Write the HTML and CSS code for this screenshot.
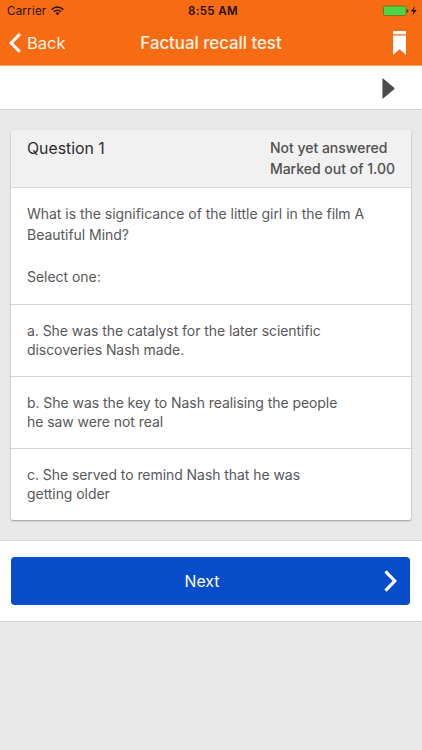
FILE: index.html
```html
<!DOCTYPE html>
<html lang="en">
<head>
    <meta charset="UTF-8">
    <meta name="viewport" content="width=device-width, initial-scale=1.0">
    <title>Factual recall test</title>
    <link rel="stylesheet" href="styles.css">
</head>
<body>

    <!-- Header -->
    <header class="header">
        <div class="status">
            <div class="carrier">
                <span>Carrier</span>
                <svg width="13" height="10" viewBox="0 0 13 10" fill="none" stroke="#251003" stroke-width="1.5">
                    <path d="M0.7 3.6Q6.5 -1.6 12.3 3.6M2.8 5.8Q6.5 2.6 10.2 5.8"/>
                    <path d="M4.4 7.2Q6.5 5.4 8.6 7.2L6.5 9.3Z" fill="#251003" stroke="none"/>
                </svg>
            </div>
            <span class="time">8:55 AM</span>
            <div class="battery">
                <svg width="34" height="12" viewBox="0 0 34 12">
                    <rect x="0.5" y="1" width="22.5" height="9.6" rx="1.5" fill="#4cd549" stroke="#6f7a18"/>
                    <path d="M23.8 4.3Q25.5 4.6 25.5 6T23.8 7.7Z" fill="#5a3008"/>
                    <path d="M32 1L27.8 6.4H30.4L29.4 10.6L33.7 5H31Z" fill="#251003"/>
                </svg>
            </div>
        </div>
        <div class="navbar">
            <a class="back" href="#">
                <svg width="12" height="20" viewBox="0 0 12 20" fill="none" stroke="#fff" stroke-width="3">
                    <path d="M10.9 1.1L2.1 10L10.9 18.9"/>
                </svg>
                <span>Back</span>
            </a>
            <h1 class="title">Factual recall test</h1>
            <svg class="bookmark" width="13" height="24" viewBox="0 0 13 24" fill="#fff">
                <path d="M0 0H13V3.3H0ZM0 4.6H13V24L6.5 18.3L0 24Z"/>
            </svg>
        </div>
    </header>

    <!-- Page navigation -->
    <div class="toolbar">
        <svg width="13" height="21" viewBox="0 0 13 21" fill="#4c4c4c">
            <path d="M0.4 0.8Q0.4 0 1.1 0.6L12.2 9.8Q12.8 10.5 12.2 11.2L1.1 20.4Q0.4 21 0.4 20.2Z"/>
        </svg>
    </div>

    <!-- Question -->
    <main class="card">
        <div class="card-header">
            <h2 class="number">Question 1</h2>
            <p class="state">Not yet answered<br>Marked out of 1.00</p>
        </div>
        <div class="question">
            <p>What is the significance of the little girl in the film A<br>Beautiful Mind?</p>
            <p class="prompt">Select one:</p>
        </div>
        <div class="answer">a. She was the catalyst for the later scientific<br>discoveries Nash made.</div>
        <div class="answer">b. She was the key to Nash realising the people<br>he saw were not real</div>
        <div class="answer">c. She served to remind Nash that he was<br>getting older</div>
    </main>

    <!-- Next button -->
    <footer class="footer">
        <button class="next">
            <span class="next-label">Next</span>
            <svg width="13" height="22" viewBox="0 0 13 22" fill="none" stroke="#fff" stroke-width="3.2">
                <path d="M1.5 1.3L10.8 11L1.5 20.7"/>
            </svg>
        </button>
    </footer>

</body>
</html>
```
FILE: styles.css
```css
* {
    box-sizing: border-box;
}

body {
    margin: 0;
    background-color: #e9e9e9;
    color: #58585a;
    font-family: Inter, "Liberation Sans", sans-serif;
    font-size: 14px;
}

h1, h2, p {
    margin: 0;
    font-weight: 400;
}

svg {
    display: block;
    flex: none;
}

/* Header */
.header {
    height: 66px;
    background-color: #f76c12;
    border-bottom: 1px solid #faa468;
}

.status {
    display: grid;
    grid-template-columns: 1fr auto 1fr;
    align-items: center;
    height: 22px;
    padding: 0 5px;
    color: #251003;
    font-size: 11.5px;
}

.carrier {
    display: flex;
    align-items: center;
    gap: 5px;
    padding-left: 2px;
    letter-spacing: 0.25px;
}

.time {
    padding-left: 4px;
    font-weight: 600;
    letter-spacing: 0.4px;
}

.battery {
    justify-self: end;
}

.navbar {
    display: grid;
    grid-template-columns: 1fr auto 1fr;
    align-items: center;
    height: 42px;
    padding: 0 9px;
    color: #fff3e6;
    font-size: 16.5px;
}

.back {
    display: flex;
    align-items: center;
    gap: 6px;
    color: inherit;
    text-decoration: none;
}

.title {
    font-size: 16.8px;
    font-weight: 500;
}

.bookmark {
    justify-self: end;
    margin-right: 7px;
}

/* Toolbar */
.toolbar {
    display: flex;
    justify-content: flex-end;
    align-items: center;
    height: 44px;
    padding: 2px 27px 0 0;
    background-color: #fff;
    border-bottom: 1px solid #d9d9d9;
}

/* Question card */
.card {
    margin: 20px 11px;
    background-color: #fff;
    border-radius: 2px;
    box-shadow: 0 1px 2px rgba(0, 0, 0, 0.35);
    overflow: hidden;
}

.card-header {
    display: flex;
    justify-content: space-between;
    height: 58px;
    padding: 8px 16px 0;
    background-color: #f1f1f1;
    border-bottom: 1px solid #dadada;
}

.number {
    color: #2c2c2c;
    font-size: 15.8px;
    line-height: 21px;
}

.state {
    color: #505050;
    font-weight: 500;
    line-height: 20.5px;
}

.question {
    height: 116px;
    padding: 16px 16px 0;
    letter-spacing: -0.03px;
    line-height: 20.5px;
}

.prompt {
    margin-top: 22px;
}

.answer {
    height: 72px;
    padding: 16px 16px 0;
    border-top: 1px solid #d6d6d6;
    letter-spacing: -0.06px;
    line-height: 19px;
}

/* Footer */
.footer {
    height: 82px;
    padding: 16px 12px 16px 11px;
    background-color: #fff;
    border-top: 1px solid #d9d9d9;
    border-bottom: 1px solid #d9d9d9;
}

.next {
    display: flex;
    align-items: center;
    width: 100%;
    height: 48px;
    padding: 0 13px 0 0;
    background-color: #074dca;
    border: none;
    border-radius: 4px;
    color: #fff;
    font-family: inherit;
    font-size: 15.8px;
    cursor: pointer;
}

.next-label {
    flex: 1;
    padding-left: 9px;
    text-align: center;
}
```
